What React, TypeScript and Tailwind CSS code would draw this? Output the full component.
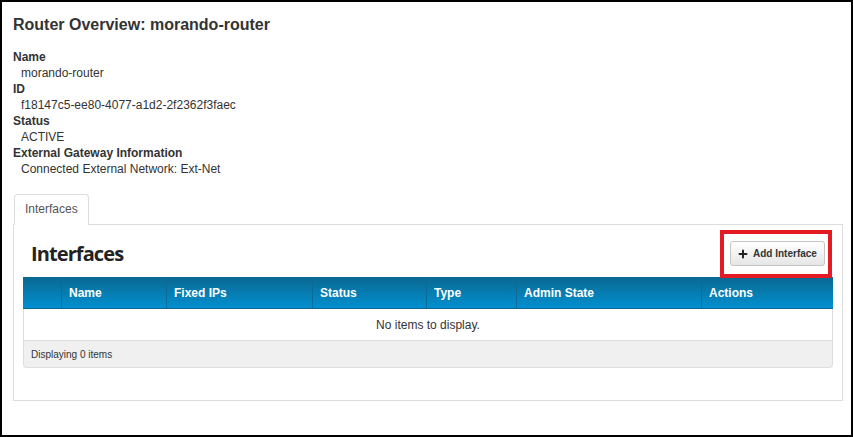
import { Plus } from 'lucide-react';

const columns = [
  { label: '', width: 'w-[39px]' },
  { label: 'Name', width: 'w-[105px]' },
  { label: 'Fixed IPs', width: 'w-[146px]' },
  { label: 'Status', width: 'w-[114px]' },
  { label: 'Type', width: 'w-[90px]' },
  { label: 'Admin State', width: 'w-[185px]' },
  { label: 'Actions', width: 'flex-1' },
];

const details = [
  { label: 'Name', value: 'morando-router' },
  { label: 'ID', value: 'f18147c5-ee80-4077-a1d2-2f2362f3faec' },
  { label: 'Status', value: 'ACTIVE' },
  { label: 'External Gateway Information', value: 'Connected External Network: Ext-Net' },
];

export default function App() {
  return (
    <div className="w-[853px] h-[437px] overflow-hidden border-2 border-black bg-white pl-[11px] pr-[8px] pt-[13px] font-['Liberation_Sans',Arial,sans-serif] text-[#333]">
      {/* title */}
      <h1 className="text-[16px] leading-[20px] font-bold">Router Overview: morando-router</h1>

      {/* router details */}
      <dl className="mt-[14px] text-[12px] leading-[16px]">
        {details.map((d) => (
          <div key={d.label}>
            <dt className="font-bold">{d.label}</dt>
            <dd className="pl-[8px]">{d.value}</dd>
          </div>
        ))}
      </dl>

      {/* tabs */}
      <div className="mt-[17px] flex">
        <div className="relative z-10 ml-px -mb-px h-[31px] border border-b-0 border-[#ddd] rounded-t-[4px] bg-white px-[10px] text-[12px] leading-[29px] text-[#555]">
          Interfaces
        </div>
      </div>

      <div className="border border-[#ddd] px-[9px] pt-[16px] pb-[32px]">
        <div className="flex items-center justify-between mb-[11px]">
          <h2 className="ml-[8px] text-[20px] leading-[25px] font-bold font-['Open_Sans',sans-serif] tracking-[-0.9px] text-[#222]">
            Interfaces
          </h2>
          <span className="relative mr-[8px]">
            <button className="flex items-center gap-[4px] h-[25px] w-[95px] pl-[6px] rounded-[3px] border border-[#c5c5c5] bg-gradient-to-b from-white to-[#e6e6e6] text-[10px] font-bold text-[#333]">
              <Plus size={12} strokeWidth={4} className="text-[#222]" />
              Add Interface
            </button>
            <span className="absolute -left-[10px] -right-[7px] -top-[11px] -bottom-[12px] z-20 border-[4px] border-[#e31b23]" />
          </span>
        </div>

        {/* table */}
        <div className="text-[12px]">
          <div className="flex h-[32px] border-b border-[#0b6690] bg-gradient-to-b from-[#0a6891] to-[#0090d0] text-white font-bold">
            {columns.map((c, i) => (
              <div
                key={i}
                className={`${c.width} flex items-center pl-[7px] ${i < columns.length - 1 ? 'border-r border-[#0b6a96]' : ''}`}
              >
                {c.label}
              </div>
            ))}
          </div>
          <div className="flex h-[32px] items-center justify-center border-x border-b border-[#ddd]">
            No items to display.
          </div>
          <div className="flex h-[27px] items-center rounded-b-[4px] border-x border-b border-[#ddd] bg-[#f0f0f0] pl-[7px] text-[10px]">
            Displaying 0 items
          </div>
        </div>
      </div>
    </div>
  );
}
